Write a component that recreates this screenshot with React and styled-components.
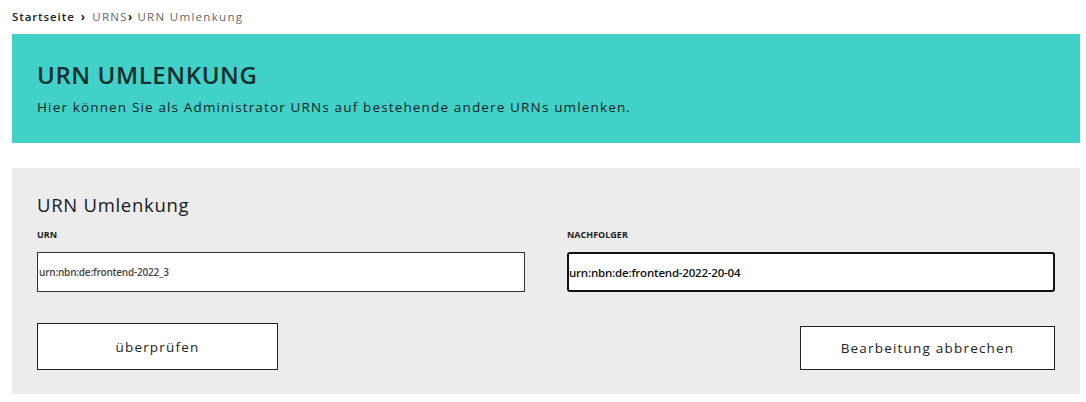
import styled, { createGlobalStyle } from "styled-components";

const GlobalStyle = createGlobalStyle`
  body {
    margin: 0;
    background: #ffffff;
    font-family: "Open Sans", "Liberation Sans", sans-serif;
    color: #222;
  }
`;

const Page = styled.div`
  width: 1068px;
  margin-left: 12px;
`;

const Breadcrumb = styled.nav`
  display: flex;
  align-items: center;
  height: 34px;
  font-size: 11.5px;
  letter-spacing: 1.3px;
  color: #666;
  padding-bottom: 2px;
  box-sizing: border-box;

  strong {
    color: #222;
    font-weight: 600;
    letter-spacing: 0.9px;
  }
`;

const Sep = styled.span`
  color: #222;
  font-weight: 700;
  margin: 0 ${(p) => p.$right}px 0 ${(p) => p.$left}px;
`;

const Banner = styled.header`
  background: #41d1c9;
  height: 109px;
  padding: 24px 25px 0;
  box-sizing: border-box;

  h1 {
    margin: 0;
    font-size: 24px;
    font-weight: 600;
    color: #13302e;
    letter-spacing: 0.6px;
  }

  p {
    margin: 7px 0 0;
    font-size: 13.5px;
    letter-spacing: 1.15px;
    color: #102523;
  }
`;

const Panel = styled.section`
  margin-top: 25px;
  background: #ececec;
  height: 226px;
  padding: 24px 25px 0;
  box-sizing: border-box;

  h2 {
    margin: 0;
    font-size: 18.5px;
    font-weight: 500;
    color: #1a1a1a;
    letter-spacing: 0.7px;
  }
`;

const Fields = styled.div`
  display: grid;
  grid-template-columns: 488px 488px;
  justify-content: space-between;
  margin-top: 11px;
`;

const Field = styled.div`
  display: flex;
  flex-direction: column;

  label {
    font-size: 9px;
    font-weight: 700;
    color: #222;
    height: 11px;
    margin-bottom: 13px;
  }
`;

const Input = styled.input`
  box-sizing: border-box;
  height: 40px;
  width: 100%;
  background: #fff;
  font-family: "Open Sans", "Liberation Sans", sans-serif;
  outline: none;
  padding: 0 0 0 ${(p) => (p.$focus ? 0 : 1)}px;
  border: ${(p) => (p.$focus ? "2px solid #111" : "1px solid #333")};
  border-radius: ${(p) => (p.$focus ? "3px" : "0")};
  font-size: ${(p) => (p.$focus ? "11.5px" : "10px")};
  font-weight: 600;
  color: ${(p) => (p.$focus ? "#111" : "#444")};
  letter-spacing: -0.2px;
`;

const Actions = styled.div`
  display: flex;
  justify-content: space-between;
  align-items: flex-start;
  margin-top: 31px;
`;

const Button = styled.button`
  box-sizing: border-box;
  background: #fff;
  border: 1px solid #222;
  font-family: "Open Sans", "Liberation Sans", sans-serif;
  font-size: 13.5px;
  letter-spacing: 1.2px;
  color: #222;
  width: ${(p) => p.$w}px;
  height: ${(p) => p.$h}px;
  margin-top: ${(p) => p.$top || 0}px;
  cursor: pointer;
`;

export default function App() {
  return (
    <>
      <GlobalStyle />
      <Page>
        <Breadcrumb>
          <strong>Startseite</strong>
          <Sep $left={6} $right={6}>›</Sep>
          URNS
          <Sep $left={0} $right={4}>›</Sep>
          URN Umlenkung
        </Breadcrumb>
        <Banner>
          <h1>URN UMLENKUNG</h1>
          <p>Hier können Sie als Administrator URNs auf bestehende andere URNs umlenken.</p>
        </Banner>
        <Panel>
          <h2>URN Umlenkung</h2>
          <Fields>
            <Field>
              <label>URN</label>
              <Input readOnly value="urn:nbn:de:frontend-2022_3" />
            </Field>
            <Field>
              <label>NACHFOLGER</label>
              <Input $focus readOnly value="urn:nbn:de:frontend-2022-20-04" />
            </Field>
          </Fields>
          <Actions>
            <Button $w={241} $h={47}>überprüfen</Button>
            <Button $w={255} $h={44} $top={3}>Bearbeitung abbrechen</Button>
          </Actions>
        </Panel>
      </Page>
    </>
  );
}
